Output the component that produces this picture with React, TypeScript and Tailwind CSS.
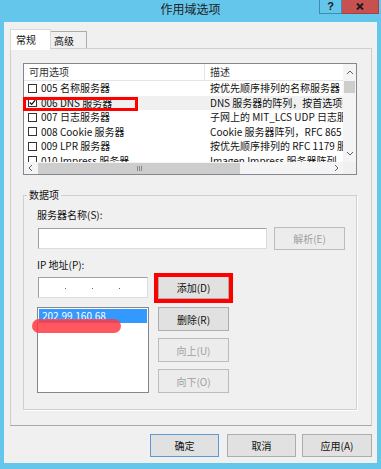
import React from "react";

const rows = [
  { name: "005 名称服务器", desc: "按优先顺序排列的名称服务器 [IEN 116]", checked: false },
  { name: "006 DNS 服务器", desc: "DNS 服务器的阵列，按首选项排列", checked: true, sel: true },
  { name: "007 日志服务器", desc: "子网上的 MIT_LCS UDP 日志服务器", checked: false },
  { name: "008 Cookie 服务器", desc: "Cookie 服务器阵列，RFC 865", checked: false },
  { name: "009 LPR 服务器", desc: "按优先顺序排列的 RFC 1179 服务器", checked: false },
  { name: "010 Impress 服务器", desc: "Imagen Impress 服务器阵列", checked: false },
];

function Chevron({ dir }: { dir: "up" | "down" | "left" | "right" }) {
  const d =
    dir === "up"
      ? "M1 5 L4 2 L7 5"
      : dir === "down"
      ? "M1 2 L4 5 L7 2"
      : dir === "left"
      ? "M5 1 L2 4 L5 7"
      : "M2 1 L5 4 L2 7";
  return (
    <svg width="8" height="8" viewBox="0 0 8 8">
      <path d={d} fill="none" stroke="#606060" strokeWidth="1" />
    </svg>
  );
}

function Btn({
  children,
  w = "w-[71px]",
  h = "h-[24px]",
  disabled = false,
  def = false,
}: {
  children: React.ReactNode;
  w?: string;
  h?: string;
  disabled?: boolean;
  def?: boolean;
}) {
  return (
    <div
      className={`${w} ${h} flex items-center justify-center border text-[10px] ${
        disabled
          ? "border-[#bcbcbc] bg-[#ececec] text-[#a0a0a0]"
          : def
          ? "border-[#5b9bd5] bg-[#e1e1e1] text-[#111]"
          : "border-[#adadad] bg-[#e1e1e1] text-[#111]"
      }`}
    >
      {children}
    </div>
  );
}

export default function App() {
  return (
    <div className="relative w-[381px] h-[469px] overflow-hidden bg-[#64c6ea] font-['Noto_Sans_CJK_SC',sans-serif] text-[10px] text-[#111]">
      {/* title bar */}
      <div className="relative h-[22px]">
        <div className="h-[18px] leading-[18px] text-center text-[12px] text-[#222]">作用域选项</div>
        <div className="absolute top-0 left-[319px] flex">
          <div className="w-[23px] h-[14px] border border-t-0 border-[#3d8db3] flex items-center justify-center text-[11px] font-bold leading-none text-[#1a1a1a] font-['Liberation_Sans',sans-serif]">
            ?
          </div>
          <div className="w-[37px] h-[14px] border border-t-0 border-l-0 border-[#a94040] bg-[#c75050] flex items-center justify-center">
            <svg width="8" height="7" viewBox="0 0 8 7">
              <path d="M1 0.5 L7 6.5 M7 0.5 L1 6.5" stroke="#1a1a1a" strokeWidth="1.8" />
            </svg>
          </div>
        </div>
      </div>

      {/* body */}
      <div className="ml-[4px] w-[373px] h-[441px] bg-[#f0f0f0] pt-[7px] pl-[6px] pr-[5px]">
        {/* tabs */}
        <div className="flex items-start h-[19px]">
          <div className="relative z-10 w-[41px] h-[21px] bg-white border border-b-0 border-[#d9d9d9] pl-[5px] pt-[3px] leading-[14px]">
            常规
          </div>
          <div className="w-[37px] h-[17px] mt-[2px] -ml-[1px] bg-[#f0f0f0] border border-b-0 border-[#acacac] pl-[3px] pt-[2px] leading-[14px]">
            高级
          </div>
        </div>

        {/* panel */}
        <div className="relative w-[362px] h-[378px] border border-[#cfcfcf] border-b-[#a7a7a7] pl-[12px] pt-[14px]">
          {/* list view */}
          <div className="w-[334px] h-[112px] border border-[#828790] bg-white grid grid-cols-[319px_13px] grid-rows-[98px_12px]">
            <div className="overflow-hidden">
              <div className="flex h-[17px] border-b border-[#e5e5e5] leading-[16px] text-[#333]">
                <div className="w-[181px] shrink-0 pl-[5px] border-r border-[#e5e5e5]">可用选项</div>
                <div className="pl-[5px]">描述</div>
              </div>
              {rows.map((r) => (
                <div
                  key={r.name}
                  className={`flex h-[14.5px] items-center whitespace-nowrap ${r.sel ? "bg-[#f0f0f0]" : ""}`}
                >
                  <div className="w-[181px] shrink-0 flex items-center pl-[4px] overflow-hidden">
                    <div className="w-[9px] h-[9px] border border-[#333] bg-white flex items-center justify-center shrink-0">
                      {r.checked && (
                        <svg width="7" height="7" viewBox="0 0 7 7">
                          <path d="M0.8 3.5 L2.7 5.4 L6.2 1.2" fill="none" stroke="#111" strokeWidth="1.3" />
                        </svg>
                      )}
                    </div>
                    <span className="ml-[4px] leading-[14px]">{r.name}</span>
                  </div>
                  <div className="pl-[5px] leading-[14px] shrink-0">{r.desc}</div>
                </div>
              ))}
            </div>
            {/* vertical scrollbar */}
            <div className="bg-[#f4f4f4] flex flex-col items-center">
              <div className="h-[17px] flex items-center justify-center">
                <Chevron dir="up" />
              </div>
              <div className="w-[11px] h-[12px] bg-[#cdcdcd]" />
              <div className="flex-1" />
              <div className="h-[16px] flex items-center justify-center">
                <Chevron dir="down" />
              </div>
            </div>
            {/* horizontal scrollbar */}
            <div className="bg-[#f4f4f4] flex items-center">
              <div className="w-[14px] flex items-center justify-center">
                <Chevron dir="left" />
              </div>
              <div className="w-[202px] h-[11px] bg-[#cdcdcd] flex items-center justify-center gap-[1px]">
                <div className="w-[1px] h-[5px] bg-[#888]" />
                <div className="w-[1px] h-[5px] bg-[#888]" />
                <div className="w-[1px] h-[5px] bg-[#888]" />
              </div>
              <div className="flex-1" />
              <div className="w-[13px] flex items-center justify-center">
                <Chevron dir="right" />
              </div>
            </div>
            <div className="bg-[#f0f0f0]" />
          </div>

          {/* group box */}
          <fieldset className="mt-[13px] w-[334px] h-[222px] border border-[#cfcfcf] shadow-[1px_1px_0_#ffffff] m-0 p-0 min-w-0">
            <legend className="ml-[3px] px-[2px] leading-[14px] text-[10px]">数据项</legend>
            <div className="pl-[13px]">
              <div className="mt-[6px] h-[14px] leading-[14px]">服务器名称(S):</div>
              <div className="mt-[5px] flex h-[23px]">
                <div className="mt-[1px] ml-[1px] w-[229px] h-[21px] bg-white border border-[#a0a0a0] border-r-[#dcdcdc] border-b-[#dcdcdc]" />
                <div className="ml-[7px]">
                  <Btn disabled h="h-[23px]">解析(E)</Btn>
                </div>
              </div>
              <div className="mt-[8px] h-[14px] leading-[14px]">IP 地址(P):</div>
              <div className="mt-[4px] flex h-[23px]">
                <div className="mt-[1px] ml-[1px] w-[110px] h-[21px] bg-white border border-[#a0a0a0] border-r-[#dcdcdc] border-b-[#dcdcdc] grid grid-cols-4">
                  {[0, 1, 2, 3].map((i) => (
                    <div key={i} className="flex items-center justify-end pt-[2px]">
                      {i < 3 && <div className="w-[1px] h-[1px] bg-[#8a5050]" />}
                    </div>
                  ))}
                </div>
                <div className="ml-[10px]">
                  <Btn h="h-[23px]">添加(D)</Btn>
                </div>
              </div>
              <div className="mt-[8px] flex">
                <div className="w-[112px] h-[86px] bg-white border border-[#828790] p-[1px]">
                  <div className="h-[14px] bg-[#3399ff] text-white pl-[3px] leading-[14px]">202.99.160.68</div>
                </div>
                <div className="ml-[9px] flex flex-col gap-[7px]">
                  <Btn>删除(R)</Btn>
                  <Btn disabled>向上(U)</Btn>
                  <Btn disabled>向下(O)</Btn>
                </div>
              </div>
            </div>
          </fieldset>
        </div>

        {/* bottom buttons */}
        <div className="mt-[8px] flex justify-end">
          <Btn def w="w-[69px]" h="h-[23px]">确定</Btn>
          <div className="ml-[8px]">
            <Btn w="w-[69px]" h="h-[23px]">取消</Btn>
          </div>
          <div className="ml-[6px]">
            <Btn w="w-[70px]" h="h-[23px]">应用(A)</Btn>
          </div>
        </div>
      </div>

      {/* annotation overlays */}
      <div className="absolute left-[23px] top-[97px] w-[115px] h-[14px] border-[3px] border-[#ff0000]" />
      <div className="absolute left-[154px] top-[273px] w-[79px] h-[30px] border-[4px] border-[#ff0000]" />
      <div className="absolute left-[32px] top-[319px] w-[89px] h-[14px] rounded-full bg-[#ff3a44]/85 blur-[0.6px]" />
    </div>
  );
}
